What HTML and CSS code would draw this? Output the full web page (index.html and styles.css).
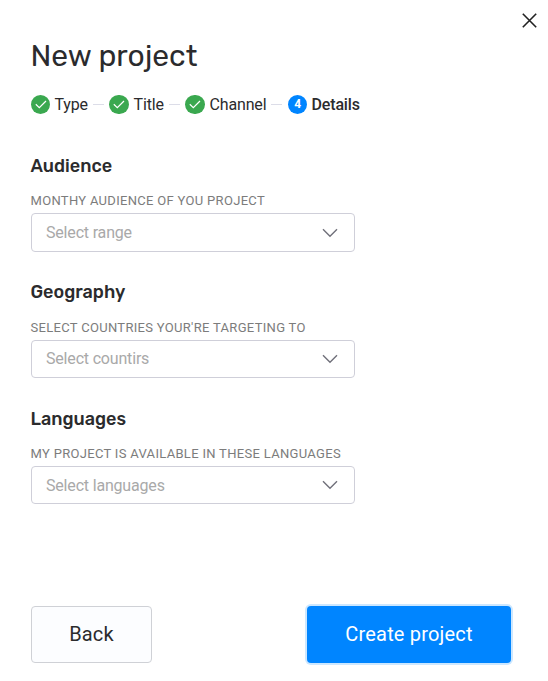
FILE: index.html
```html
<!DOCTYPE html>
<html lang="en">
<head>
    <meta charset="UTF-8">
    <meta name="viewport" content="width=device-width, initial-scale=1.0">
    <title>New project</title>
    <link rel="stylesheet" href="styles.css">
</head>
<body>

    <div class="modal">
        <!-- Header -->
        <header class="modal-header">
            <h1>New project</h1>
            <button type="button" class="close" aria-label="Close">
                <svg width="15" height="15" viewBox="0 0 15 15"><path d="M.8.8l13.4 13.4M14.2.8L.8 14.2"/></svg>
            </button>
        </header>

        <!-- Steps -->
        <ol class="steps">
            <li class="step step-type">
                <span class="badge"><svg width="12" height="10" viewBox="0 0 12 10"><path d="M.8 4.3l3.5 3.4L11 1"/></svg></span>
                <span class="step-name">Type</span>
            </li>
            <li class="step step-title">
                <span class="badge"><svg width="12" height="10" viewBox="0 0 12 10"><path d="M.8 4.3l3.5 3.4L11 1"/></svg></span>
                <span class="step-name">Title</span>
            </li>
            <li class="step step-channel">
                <span class="badge"><svg width="12" height="10" viewBox="0 0 12 10"><path d="M.8 4.3l3.5 3.4L11 1"/></svg></span>
                <span class="step-name">Channel</span>
            </li>
            <li class="step current">
                <span class="badge">4</span>
                <span class="step-name">Details</span>
            </li>
        </ol>

        <!-- Form -->
        <form class="form">
            <section class="form-group audience">
                <h2>Audience</h2>
                <p class="label">MONTHY AUDIENCE OF YOU PROJECT</p>
                <div class="select">
                    <span>Select range</span>
                    <svg width="16" height="10" viewBox="0 0 16 10"><path d="M1 1.2l7 7 7-7"/></svg>
                </div>
            </section>

            <section class="form-group geography">
                <h2>Geography</h2>
                <p class="label">SELECT COUNTRIES YOUR'RE TARGETING TO</p>
                <div class="select">
                    <span>Select countirs</span>
                    <svg width="16" height="10" viewBox="0 0 16 10"><path d="M1 1.2l7 7 7-7"/></svg>
                </div>
            </section>

            <section class="form-group languages">
                <h2>Languages</h2>
                <p class="label">MY PROJECT IS AVAILABLE IN THESE LANGUAGES</p>
                <div class="select">
                    <span>Select languages</span>
                    <svg width="16" height="10" viewBox="0 0 16 10"><path d="M1 1.2l7 7 7-7"/></svg>
                </div>
            </section>
        </form>

        <!-- Actions -->
        <footer class="actions">
            <button type="button" class="btn btn-back">Back</button>
            <button type="button" class="btn btn-create">Create project</button>
        </footer>
    </div>

</body>
</html>
```

FILE: styles.css
```css
* {
    box-sizing: border-box;
}

body {
    margin: 0;
    background: #fff;
    color: #2b2b2d;
    font-family: Roboto, "Liberation Sans", sans-serif;
}

h1, h2, p, ol {
    margin: 0;
    padding: 0;
}

.modal {
    display: flex;
    flex-direction: column;
    height: 681px;
    padding: 13px 11px 18px 31px;
}

/* Header */
.modal-header {
    display: flex;
    justify-content: space-between;
    align-items: flex-start;
    height: 82px;
}

h1 {
    margin-left: -0.5px;
    padding-top: 24px;
    font-family: Rubik, Roboto, "Liberation Sans", sans-serif;
    font-size: 30px;
    line-height: 38px;
    font-weight: 400;
}

.close {
    padding: 0;
    border: none;
    background: none;
    line-height: 0;
    cursor: pointer;
}

.close svg {
    fill: none;
    stroke: #222;
    stroke-width: 1.6;
}

/* Steps */
.steps {
    display: flex;
    height: 19px;
    list-style: none;
}

.step {
    display: flex;
    align-items: center;
    font-size: 16px;
    line-height: 19px;
    letter-spacing: -0.15px;
}

.step:not(.current)::after {
    content: "";
    width: 11px;
    height: 1px;
    margin: 0 5px;
    background: #dcdde8;
}

.step-type {
    width: 78px;
}

.step-title {
    width: 76px;
}

.step-channel {
    width: 103px;
}

.badge {
    display: flex;
    flex: none;
    justify-content: center;
    align-items: center;
    width: 19px;
    height: 19px;
    margin-right: 4.5px;
    border-radius: 10px;
    background: #3aa84f;
    color: #fff;
    font-size: 12px;
    font-weight: 700;
}

.step-title .badge,
.step-channel .badge {
    width: 20px;
}

.badge svg {
    fill: none;
    stroke: #fff;
    stroke-width: 1.2;
}

.current .badge {
    background: #0085ff;
}

.current .step-name {
    font-weight: 500;
}

/* Form */
.form {
    padding-top: 40px;
}

.form-group {
    width: 324px;
    height: 127px;
}

h2 {
    font-family: Rubik, Roboto, "Liberation Sans", sans-serif;
    font-size: 18px;
    line-height: 24px;
    font-weight: 500;
    margin-left: -0.5px;
}

.label {
    margin-left: -0.5px;
    padding-top: 14px;
    color: #7c7c7c;
    font-size: 13px;
    line-height: 17px;
    letter-spacing: 0.31px;
    white-space: nowrap;
}

.select {
    display: flex;
    justify-content: space-between;
    align-items: center;
    height: 38px;
    margin-top: 4px;
    padding: 0 16px 0 14px;
    border: 1px solid #cfcfd9;
    border-radius: 4px;
    color: #a9a9a9;
    font-size: 16px;
    letter-spacing: -0.18px;
}

.audience .select {
    height: 39px;
}

/* This block starts one pixel higher than the even rhythm */
.geography {
    height: 127px;
    margin-top: -1px;
}

.geography .label {
    padding-top: 15px;
}

.geography .select {
    padding-bottom: 1px;
}

.select svg {
    fill: none;
    stroke: #70707a;
    stroke-width: 1.4;
}

/* Actions */
.actions {
    display: flex;
    justify-content: space-between;
    margin-top: auto;
    padding-right: 26px;
}

.btn {
    height: 57px;
    padding: 0 0 2px;
    border-radius: 4px;
    font-family: inherit;
    font-size: 20px;
    cursor: pointer;
}

.btn-back {
    width: 121px;
    border: 1px solid #cfd1d6;
    background: #fcfdff;
    color: #2b2b2d;
    letter-spacing: 0.2px;
}

.btn-create {
    width: 204px;
    border: none;
    background: #0085ff;
    box-shadow: 0 0 0 2px #cce7ff;
    color: #fff;
    letter-spacing: 0.18px;
}
```
